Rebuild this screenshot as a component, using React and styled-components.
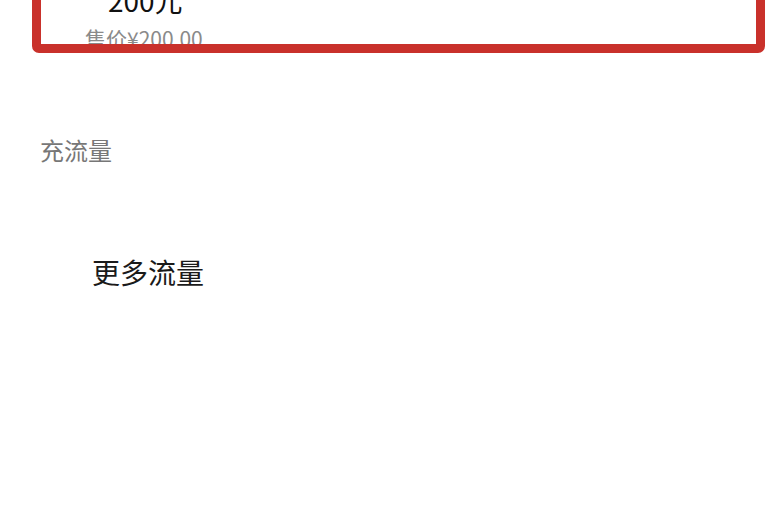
import React from 'react';
import styled, { createGlobalStyle } from 'styled-components';

const GlobalStyle = createGlobalStyle`
  html, body {
    margin: 0;
    padding: 0;
    background: #ffffff;
    font-family: "Noto Sans CJK SC", "Noto Sans", sans-serif;
  }
`;

const Page = styled.div`
  width: 768px;
  height: 510px;
  overflow: hidden;
  background: #ffffff;
`;

const PlanCard = styled.div`
  box-sizing: border-box;
  margin: -48px 0 0 32px;
  width: 733px;
  height: 101px;
  border: 9px solid #c9312b;
  border-radius: 7px;
  overflow: hidden;
  padding: 25px 0 0 44px;
  background: #ffffff;
`;

const PlanName = styled.div`
  margin-left: 23px;
  font-size: 28px;
  line-height: 1;
  font-weight: 400;
  color: #111111;
`;

const PlanPrice = styled.div`
  margin-top: 14px;
  font-size: 21px;
  line-height: 1;
  color: #8a8a8a;
`;

const SectionTitle = styled.div`
  margin: 85px 0 0 40px;
  font-size: 24px;
  line-height: 1;
  color: #777777;
`;

const MoreLink = styled.div`
  margin: 96px 0 0 92px;
  font-size: 28px;
  line-height: 1;
  color: #1a1a1a;
`;

export default function App() {
  return (
    <Page>
      <GlobalStyle />
      <PlanCard>
        <PlanName>200元</PlanName>
        <PlanPrice>售价¥200.00</PlanPrice>
      </PlanCard>
      <SectionTitle>充流量</SectionTitle>
      <MoreLink>更多流量</MoreLink>
    </Page>
  );
}
